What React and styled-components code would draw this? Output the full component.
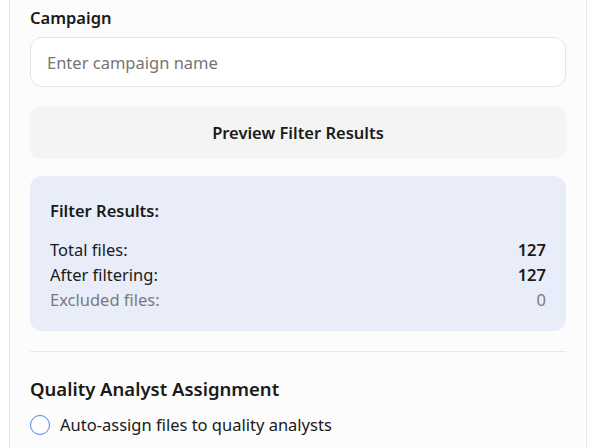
import styled, { createGlobalStyle } from 'styled-components'

const Global = createGlobalStyle`
  html, body {
    margin: 0;
    padding: 0;
    background: #ffffff;
  }
  body {
    font-family: 'Noto Sans', 'Open Sans', sans-serif;
    color: #1a1a1a;
    overflow: hidden;
  }
`

const Panel = styled.section`
  margin-left: 9px;
  width: 578px;
  box-sizing: border-box;
  min-height: 460px;
  background: #fcfcfc;
  border: 1px solid #e6e6e6;
  border-top: none;
  padding: 6px 20px 0;
  display: flex;
  flex-direction: column;
`

const Label = styled.label`
  font-size: 16.5px;
  font-weight: 600;
  line-height: 24px;
  margin-bottom: 7px;
`

const Input = styled.input`
  box-sizing: border-box;
  height: 50px;
  width: 100%;
  border: 1px solid #e4e4e4;
  border-radius: 12px;
  background: #ffffff;
  padding: 0 16px;
  font-family: inherit;
  font-size: 16.5px;
  color: #1a1a1a;
  outline: none;
  &::placeholder {
    color: #757575;
  }
`

const Button = styled.button`
  margin-top: 20px;
  height: 50px;
  width: 100%;
  border: none;
  border-radius: 11px;
  background: #f4f4f3;
  box-shadow: 0 1px 3px rgba(0, 0, 0, 0.06);
  font-family: inherit;
  font-size: 16.5px;
  font-weight: 600;
  color: #1a1a1a;
  cursor: pointer;
`

const Results = styled.div`
  margin-top: 19px;
  background: #e8edf9;
  border-radius: 12px;
  padding: 23px 20px 19px;
`

const ResultsTitle = styled.h3`
  margin: 0 0 14px;
  font-size: 16.5px;
  font-weight: 600;
  line-height: 24px;
`

const Row = styled.div`
  display: flex;
  justify-content: space-between;
  font-size: 16.5px;
  line-height: 25px;
  color: ${(p) => (p.$muted ? '#7a7a7a' : '#1a1a1a')};
`

const Value = styled.span`
  font-weight: ${(p) => (p.$bold ? 600 : 400)};
`

const Divider = styled.hr`
  margin: 20px 0 0;
  border: none;
  height: 1px;
  background: #e7e7e7;
`

const SectionTitle = styled.h2`
  margin: 23px 0 9px;
  font-size: 18.5px;
  font-weight: 600;
  line-height: 28px;
`

const Option = styled.label`
  display: flex;
  align-items: center;
  gap: 10px;
  font-size: 16.5px;
  line-height: 26px;
`

const Radio = styled.span`
  width: 20px;
  height: 20px;
  box-sizing: border-box;
  border: 1.5px solid #4a80ee;
  border-radius: 50%;
  background: #ffffff;
  flex-shrink: 0;
`

export default function App() {
  return (
    <>
      <Global />
      <Panel>
        <Label>Campaign</Label>
        <Input placeholder='Enter campaign name' />
        <Button>Preview Filter Results</Button>
        <Results>
          <ResultsTitle>Filter Results:</ResultsTitle>
          <Row>
            <span>Total files:</span>
            <Value $bold>127</Value>
          </Row>
          <Row>
            <span>After filtering:</span>
            <Value $bold>127</Value>
          </Row>
          <Row $muted>
            <span>Excluded files:</span>
            <Value>0</Value>
          </Row>
        </Results>
        <Divider />
        <SectionTitle>Quality Analyst Assignment</SectionTitle>
        <Option>
          <Radio />
          Auto-assign files to quality analysts
        </Option>
      </Panel>
    </>
  )
}
